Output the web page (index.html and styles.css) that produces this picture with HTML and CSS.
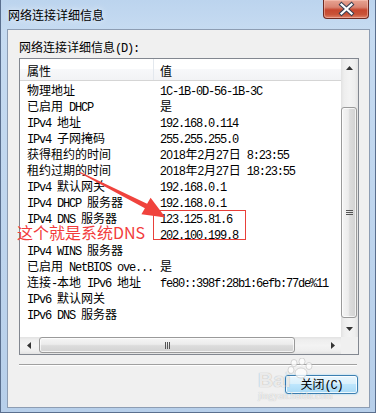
FILE: index.html
```html
<!DOCTYPE html>
<html lang="zh-CN">
<head>
  <meta charset="UTF-8">
  <title>网络连接详细信息</title>
  <link rel="stylesheet" href="styles.css">
</head>
<body>
<div class="window">
  <!-- Title bar -->
  <div class="titlebar">
    <span class="title">网络连接详细信息</span>
    <div class="close-btn">
      <svg width="46" height="19" viewBox="0 0 46 19">
        <path d="M18.5 5.5 L28.5 14.5 M28.5 5.5 L18.5 14.5" stroke="#3a3f52" stroke-width="4.2" stroke-linecap="square"/>
        <path d="M18.5 5.5 L28.5 14.5 M28.5 5.5 L18.5 14.5" stroke="#fff" stroke-width="2.2" stroke-linecap="square"/>
      </svg>
    </div>
  </div>

  <!-- Dialog body -->
  <div class="client">
    <div class="caption">网络连接详细信息<span class="en">(D):</span></div>

    <div class="listview">
      <div class="list-main">
        <div class="list-head">
          <div class="col-a">属性</div>
          <div class="col-b">值</div>
        </div>
        <div class="list-rows">
          <div class="row"><div class="col-a">物理地址</div><div class="col-b"><span class="en">1C-1B-0D-56-1B-3C</span></div></div>
          <div class="row"><div class="col-a">已启用<span class="en"> DHCP</span></div><div class="col-b">是</div></div>
          <div class="row"><div class="col-a"><span class="en">IPv4 </span>地址</div><div class="col-b"><span class="en">192.168.0.114</span></div></div>
          <div class="row"><div class="col-a"><span class="en">IPv4 </span>子网掩码</div><div class="col-b"><span class="en">255.255.255.0</span></div></div>
          <div class="row"><div class="col-a">获得租约的时间</div><div class="col-b"><span class="num">2018</span>年<span class="num">2</span>月<span class="num">27</span>日<span class="en"> 8:23:55</span></div></div>
          <div class="row"><div class="col-a">租约过期的时间</div><div class="col-b"><span class="num">2018</span>年<span class="num">2</span>月<span class="num">27</span>日<span class="en"> 18:23:55</span></div></div>
          <div class="row"><div class="col-a"><span class="en">IPv4 </span>默认网关</div><div class="col-b"><span class="en">192.168.0.1</span></div></div>
          <div class="row"><div class="col-a"><span class="en">IPv4 DHCP </span>服务器</div><div class="col-b"><span class="en">192.168.0.1</span></div></div>
          <div class="row"><div class="col-a"><span class="en">IPv4 DNS </span>服务器</div><div class="col-b"><span class="en">123.125.81.6</span></div></div>
          <div class="row"><div class="col-a"></div><div class="col-b"><span class="en">202.100.199.8</span></div></div>
          <div class="row"><div class="col-a"><span class="en">IPv4 WINS </span>服务器</div><div class="col-b"></div></div>
          <div class="row"><div class="col-a">已启用<span class="en"> NetBIOS ove...</span></div><div class="col-b">是</div></div>
          <div class="row"><div class="col-a">连接<span class="en">-</span>本地<span class="en"> IPv6 </span>地址</div><div class="col-b"><span class="en">fe80::398f:28b1:6efb:77de%11</span></div></div>
          <div class="row"><div class="col-a"><span class="en">IPv6 </span>默认网关</div><div class="col-b"></div></div>
          <div class="row"><div class="col-a"><span class="en">IPv6 DNS </span>服务器</div><div class="col-b"></div></div>
        </div>
      </div>

      <!-- vertical scrollbar -->
      <div class="vscroll">
        <div class="sb-btn">
          <svg width="7" height="4" viewBox="0 0 7 4"><path d="M3.5 0 L7 4 L0 4 Z" fill="#333"/></svg>
        </div>
        <div class="v-track">
          <div class="v-thumb">
            <svg width="7" height="7" viewBox="0 0 7 7"><path d="M0 1.5 H7 M0 3.5 H7 M0 5.5 H7" stroke="#555" stroke-width="1"/></svg>
          </div>
        </div>
        <div class="sb-btn">
          <svg width="7" height="4" viewBox="0 0 7 4"><path d="M0 0 L7 0 L3.5 4 Z" fill="#333"/></svg>
        </div>
      </div>

      <!-- horizontal scrollbar -->
      <div class="hscroll">
        <div class="sb-btn">
          <svg width="4" height="7" viewBox="0 0 4 7"><path d="M0 3.5 L4 0 L4 7 Z" fill="#333"/></svg>
        </div>
        <div class="h-track">
          <div class="h-thumb">
            <svg width="7" height="7" viewBox="0 0 7 7"><path d="M1.5 0 V7 M3.5 0 V7 M5.5 0 V7" stroke="#555" stroke-width="1"/></svg>
          </div>
        </div>
        <div class="sb-btn">
          <svg width="4" height="7" viewBox="0 0 4 7"><path d="M0 0 L4 3.5 L0 7 Z" fill="#333"/></svg>
        </div>
      </div>
      <div class="corner"></div>
    </div>

    <div class="separator"></div>

    <div class="buttons">
      <button class="btn">关闭<span class="en">(C)</span></button>
    </div>
  </div>
</div>

<!-- Baidu watermark -->
<div class="watermark">
  <span class="wm-bai">Bai</span>
  <svg class="wm-paw" width="26" height="22" viewBox="0 0 26 22">
    <g fill="rgba(255,255,255,0.75)" stroke="rgba(150,150,150,0.35)" stroke-width="1">
      <ellipse cx="7" cy="5" rx="3" ry="3.5"/>
      <ellipse cx="15" cy="3.5" rx="3" ry="3.5"/>
      <ellipse cx="22" cy="8" rx="3" ry="3.5"/>
      <ellipse cx="4" cy="12" rx="3" ry="3.5"/>
      <ellipse cx="14" cy="15" rx="6" ry="5"/>
    </g>
  </svg>
  <span class="wm-url">jingyan.baidu.com</span>
</div>

<!-- Red annotation -->
<svg class="annot" width="376" height="413" viewBox="0 0 376 413">
  <rect x="153.5" y="210.5" width="92" height="29" fill="none" stroke="#e8403a" stroke-width="1"/>
  <polygon points="79.2,171.6 147.1,203.8 150.6,197.8 165.5,217.5 141.4,214.2 144.9,208.2 78.8,172.4" fill="#f0433d"/>
</svg>
<div class="annot-text">这个就是系统DNS</div>
</body>
</html>
```

FILE: styles.css
```css
body {
  margin: 0;
  padding: 0;
  width: 376px;
  height: 413px;
  overflow: hidden;
  position: relative;
  font-family: "Noto Sans CJK SC", sans-serif;
  font-size: 12px;
  color: #000;
}

.en {
  font-family: "Liberation Mono", monospace;
  font-size: 12px;
  letter-spacing: -1.2px;
}

.num {
  font-family: "Liberation Sans", sans-serif;
  font-size: 12px;
  letter-spacing: -0.3px;
}

/* window frame */
.window {
  box-sizing: border-box;
  width: 376px;
  height: 413px;
  display: flex;
  flex-direction: column;
  padding: 0 5px 4px 6px;
  border: 1px solid #5a6f8e;
  border-top: none;
  background: linear-gradient(to bottom, #bcd4ee 0, #c6dbf1 30px, #b7cfea 100%);
}

.titlebar {
  height: 29px;
  flex-shrink: 0;
  display: flex;
  align-items: center;
  padding-left: 1px;
}

.title {
  flex: 1;
  line-height: 16px;
  text-shadow: 0 0 6px rgba(255, 255, 255, 0.9);
}

.close-btn {
  align-self: flex-start;
  box-sizing: border-box;
  width: 46px;
  height: 19px;
  margin-right: 1px;
  border: 1px solid #6e2a22;
  border-top: none;
  border-radius: 0 0 4px 4px;
  background: linear-gradient(to bottom, #e8a493 0, #d98472 40%, #c7472f 55%, #c95338 80%, #e0826a 100%);
  box-shadow: inset 0 0 0 1px rgba(255, 210, 200, 0.45);
}

.close-btn svg {
  display: block;
  margin: -1px 0 0 -1px;
}

/* client area */
.client {
  flex: 1;
  display: flex;
  flex-direction: column;
  background: #f0f0f0;
  border: 1px solid #8d9db3;
  padding: 9px 10px 0 11px;
}

.caption {
  line-height: 16px;
  margin-bottom: 1px;
}

.listview {
  box-sizing: border-box;
  height: 297px;
  border: 1px solid #828790;
  background: #fff;
  display: grid;
  grid-template-columns: 1fr 17px;
  grid-template-rows: 1fr 17px;
}

.list-main {
  overflow: hidden;
}

.list-head {
  box-sizing: border-box;
  height: 22px;
  display: flex;
  border-bottom: 1px solid #d5d5d5;
  background: linear-gradient(to bottom, #ffffff 0, #ffffff 50%, #f7f8fa 50%, #f2f3f5 100%);
}

.list-head .col-a,
.list-head .col-b {
  line-height: 16px;
  padding-top: 4px;
}

.list-head .col-a {
  border-right: 1px solid #e3e8ee;
}

.col-a {
  box-sizing: border-box;
  width: 134px;
  flex-shrink: 0;
  padding-left: 7px;
  white-space: nowrap;
  overflow: hidden;
}

.col-b {
  flex: 1;
  padding-left: 6px;
  white-space: nowrap;
}

.list-rows {
  padding-top: 1px;
}

.row {
  display: flex;
  height: 16px;
  line-height: 16px;
}

/* scrollbars */
.vscroll {
  display: flex;
  flex-direction: column;
  background: linear-gradient(to right, #e2e2e2 0, #eeeeee 3px, #f3f3f3 50%, #eeeeee 14px, #e2e2e2 100%);
}

.hscroll {
  display: flex;
  background: linear-gradient(to bottom, #e2e2e2 0, #eeeeee 3px, #f3f3f3 50%, #eeeeee 14px, #e2e2e2 100%);
}

.corner {
  background: #f0f0f0;
}

.sb-btn {
  width: 17px;
  height: 17px;
  flex-shrink: 0;
  display: flex;
  align-items: center;
  justify-content: center;
}

.v-track {
  flex: 1;
  display: flex;
  flex-direction: column;
  padding: 31px 0 2px;
}

.v-thumb {
  flex: 1;
  margin: 0 1px 0 0;
  border: 1px solid #9a9a9a;
  border-radius: 3px;
  background: linear-gradient(to right, #f5f5f5 0, #ececec 45%, #dcdcdc 55%, #d2d2d2 100%);
  box-shadow: inset 0 0 0 1px rgba(255, 255, 255, 0.7);
  display: flex;
  align-items: center;
  justify-content: center;
}

.h-track {
  flex: 1;
  display: flex;
  padding-left: 2px;
}

.h-thumb {
  box-sizing: border-box;
  width: 256px;
  border: 1px solid #9a9a9a;
  border-radius: 3px;
  margin-bottom: 1px;
  background: linear-gradient(to bottom, #f5f5f5 0, #ececec 45%, #dcdcdc 55%, #d2d2d2 100%);
  box-shadow: inset 0 0 0 1px rgba(255, 255, 255, 0.7);
  display: flex;
  align-items: center;
  justify-content: center;
}

.separator {
  margin: 9px 2px 0 0;
  height: 1px;
  background: #a0a0a0;
  border-bottom: 1px solid #fff;
}

.buttons {
  display: flex;
  justify-content: flex-end;
  margin-top: 9px;
  padding-right: 1px;
}

.btn {
  width: 73px;
  height: 19px;
  padding: 0;
  font-family: "Noto Sans CJK SC", sans-serif;
  font-size: 12px;
  line-height: 16px;
  color: #000;
  border: 1px solid #3c7fb1;
  border-radius: 3px;
  background: linear-gradient(to bottom, #eaf6fd 0, #d9f0fc 45%, #bee6fd 50%, #a7d9f5 100%);
  box-shadow: inset 0 0 0 1px rgba(255, 255, 255, 0.8), 0 0 2px #8fd0f5;
}

/* watermark */
.watermark {
  position: absolute;
  left: 256px;
  top: 356px;
  width: 100px;
  height: 48px;
  pointer-events: none;
}

.wm-bai {
  position: absolute;
  left: 2px;
  top: 13px;
  font-family: "Liberation Sans", sans-serif;
  font-weight: bold;
  font-size: 21px;
  line-height: 22px;
  color: rgba(255, 255, 255, 0.8);
  text-shadow: 0 0 1px rgba(0, 0, 0, 0.35);
}

.wm-paw {
  position: absolute;
  left: 31px;
  top: 2px;
}

.wm-url {
  position: absolute;
  left: 2px;
  top: 35px;
  font-family: "Liberation Serif", serif;
  font-size: 10px;
  line-height: 10px;
  color: rgba(255, 255, 255, 0.8);
  text-shadow: 0 0 1px rgba(0, 0, 0, 0.3);
}

/* red annotation */
.annot {
  position: absolute;
  left: 0;
  top: 0;
  pointer-events: none;
}

.annot-text {
  position: absolute;
  left: 17px;
  top: 224px;
  font-family: "Noto Sans CJK SC", sans-serif;
  font-size: 16px;
  line-height: 16px;
  color: #f23c3c;
  white-space: nowrap;
}
```
